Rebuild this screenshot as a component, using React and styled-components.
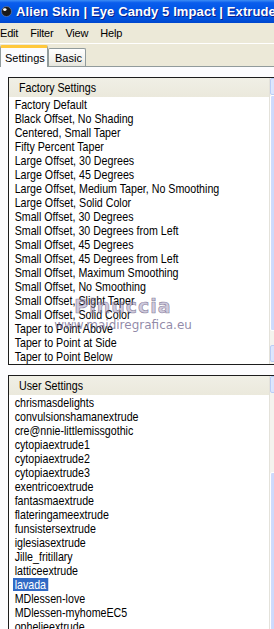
import React from 'react';
import styled, { createGlobalStyle } from 'styled-components';

const factorySettings = [
  'Factory Default',
  'Black Offset, No Shading',
  'Centered, Small Taper',
  'Fifty Percent Taper',
  'Large Offset, 30 Degrees',
  'Large Offset, 45 Degrees',
  'Large Offset, Medium Taper, No Smoothing',
  'Large Offset, Solid Color',
  'Small Offset, 30 Degrees',
  'Small Offset, 30 Degrees from Left',
  'Small Offset, 45 Degrees',
  'Small Offset, 45 Degrees from Left',
  'Small Offset, Maximum Smoothing',
  'Small Offset, No Smoothing',
  'Small Offset, Slight Taper',
  'Small Offset, Solid Color',
  'Taper to Point Above',
  'Taper to Point at Side',
  'Taper to Point Below',
];

const userSettings = [
  'chrismasdelights',
  'convulsionshamanextrude',
  'cre@nnie-littlemissgothic',
  'cytopiaextrude1',
  'cytopiaextrude2',
  'cytopiaextrude3',
  'exentricoextrude',
  'fantasmaextrude',
  'flateringameextrude',
  'funsistersextrude',
  'iglesiasextrude',
  'Jille_fritillary',
  'latticeextrude',
  'lavada',
  'MDlessen-love',
  'MDlessen-myhomeEC5',
  'ophelieextrude',
];

const GlobalStyle = createGlobalStyle`
  html, body {
    margin: 0;
    padding: 0;
    background: #ffffff;
    overflow: hidden;
  }
`;

const Window = styled.div`
  position: relative;
  width: 274px;
  height: 629px;
  overflow: hidden;
  display: flex;
  flex-direction: column;
  background: #ece9d8;
  font-family: 'Liberation Sans', Arial, sans-serif;
`;

const TitleBar = styled.div`
  height: 23px;
  flex-shrink: 0;
  display: flex;
  align-items: center;
  gap: 4px;
  padding-left: 1px;
  white-space: nowrap;
  background: linear-gradient(#3d8df5 0%, #0a5ded 12%, #0055e5 45%, #0053e0 80%, #0046cc 100%);
  color: #ffffff;
  font-weight: bold;
  font-size: 13px;
  letter-spacing: 0.1px;
  text-shadow: 1px 1px 0 #0a1e8c;
`;

const AppIcon = styled.svg`
  width: 11px;
  height: 11px;
  flex-shrink: 0;
`;

const MenuBar = styled.div`
  height: 20px;
  flex-shrink: 0;
  display: flex;
  align-items: center;
  gap: 12px;
  border-bottom: 1px solid #ffffff;
  font-size: 11px;
  color: #000;
`;

const MenuItem = styled.span`
  letter-spacing: -0.2px;
`;

const TabStrip = styled.div`
  height: 22px;
  flex-shrink: 0;
  display: flex;
  align-items: flex-end;
  border-bottom: 1px solid #919b9c;
`;

const Tab = styled.div`
  box-sizing: border-box;
  font-size: 11px;
  color: #000;
  display: flex;
  align-items: center;
  border: 1px solid #919b9c;
  border-bottom: none;
  border-radius: 2px 2px 0 0;
  height: ${({ $active }) => ($active ? '22px' : '18px')};
  margin-bottom: ${({ $active }) => ($active ? '-1px' : '0')};
  width: ${({ $width }) => $width}px;
  padding-left: ${({ $active }) => ($active ? '4px' : '6px')};
  background: ${({ $active }) =>
    $active ? '#fcfcfe' : 'linear-gradient(#ffffff, #f3f3ef 60%, #e6e5dc)'};
  border-top: ${({ $active }) => ($active ? '3px solid #ffc83c' : '1px solid #919b9c')};
  position: relative;
  z-index: ${({ $active }) => ($active ? 1 : 0)};
`;

const Panel = styled.div`
  flex: 1;
  background: #fcfcfe;
  padding: 10px 0 0 8px;
  display: flex;
  flex-direction: column;
  gap: 10px;
  overflow: hidden;
`;

const ListBox = styled.div`
  flex-shrink: 0;
  width: 279px;
  height: ${({ $height }) => $height}px;
  border: 1px solid #1c1c1c;
  display: grid;
  grid-template-columns: 260px 1px 17px;
  background: #ffffff;
  overflow: hidden;
`;

const ListBody = styled.div`
  display: flex;
  flex-direction: column;
  overflow: hidden;
`;

/* the dialog's list font is a narrow face; Arial metrics squeezed to match */
const narrowText = `
  font-family: 'Liberation Sans', Arial, sans-serif;
  font-size: 13px;
  transform: scaleX(0.82);
  transform-origin: left center;
`;

const ListHeader = styled.div`
  height: 19px;
  flex-shrink: 0;
  display: flex;
  align-items: center;
  padding-left: 10px;
  background: linear-gradient(#f0efe6, #ebe9dc);
  color: #000;
`;

const HeaderText = styled.span`
  display: inline-block;
  white-space: nowrap;
  ${narrowText}
`;

const Row = styled.div`
  height: 14px;
  flex-shrink: 0;
  padding-left: 4px;
  line-height: 14px;
  white-space: nowrap;
`;

const Label = styled.span`
  display: inline-block;
  padding: 0 3px 0 2px;
  height: 13px;
  line-height: 13px;
  margin-top: 1px;
  ${narrowText}
  background: ${({ $selected }) => ($selected ? '#316ac5' : 'transparent')};
  color: ${({ $selected }) => ($selected ? '#ffffff' : '#000000')};
`;

const Divider = styled.div`
  background: #e4e2da;
`;

const Scrollbar = styled.div`
  display: flex;
  flex-direction: column;
  background: #f4f3ee;
`;

const ScrollButton = styled.div`
  height: 17px;
  flex-shrink: 0;
  box-sizing: border-box;
  border: 1px solid #b9cdf6;
  border-radius: 2px;
  background: linear-gradient(90deg, #dfe8fd, #c3d4fc);
  display: flex;
  align-items: center;
  justify-content: flex-start;
  padding-left: 3px;
  font-size: 7px;
  color: #4d6185;
`;

const Track = styled.div`
  height: ${({ $size }) => $size}px;
  flex-shrink: 0;
`;

const Thumb = styled.div`
  height: ${({ $size }) => $size}px;
  flex-shrink: 0;
  box-sizing: border-box;
  border: 1px solid #ffffff;
  border-radius: 2px;
  background: linear-gradient(90deg, #cfdcfd, #bccffb);
  display: flex;
  align-items: center;
`;

const Grip = styled.div`
  margin-left: 4px;
  width: 6px;
  height: 7px;
  background: repeating-linear-gradient(#eef3fe 0 1px, #8ca7e5 1px 2px);
`;

const Watermark = styled.div`
  position: absolute;
  left: 60px;
  top: 296px;
  width: 126px;
  display: flex;
  flex-direction: column;
  align-items: center;
  pointer-events: none;
  color: rgba(110, 100, 140, 0.75);
  font-family: 'DejaVu Sans', sans-serif;
`;

const WatermarkName = styled.span`
  font-size: 19px;
  line-height: 20px;
  font-weight: bold;
  letter-spacing: 1px;
  color: rgba(160, 150, 185, 0.5);
  -webkit-text-stroke: 0.6px rgba(90, 80, 120, 0.7);
`;

const WatermarkUrl = styled.span`
  font-size: 12px;
  line-height: 12px;
  margin-top: 3px;
`;

const List = ({ title, items, selected, height, thumbTop, thumbSize, trackAfter }) => (
  <ListBox $height={height}>
    <ListBody>
      <ListHeader>
        <HeaderText>{title}</HeaderText>
      </ListHeader>
      {items.map((item) => (
        <Row key={item}>
          <Label $selected={item === selected}>{item}</Label>
        </Row>
      ))}
    </ListBody>
    <Divider />
    <Scrollbar>
      <ScrollButton>▲</ScrollButton>
      <Track $size={thumbTop} />
      <Thumb $size={thumbSize}>
        <Grip />
      </Thumb>
      {trackAfter > 0 && <Track $size={trackAfter} />}
      {trackAfter > 0 && <ScrollButton>▼</ScrollButton>}
    </Scrollbar>
  </ListBox>
);

const App = () => (
  <Window>
    <GlobalStyle />
    <TitleBar>
      <AppIcon viewBox="0 0 11 11">
        <circle cx="5.5" cy="5.5" r="5" fill="#1a1a1a" stroke="#7a8cab" strokeWidth="0.6" />
        <ellipse cx="3.8" cy="3.6" rx="1.8" ry="1.4" fill="#ffffff" />
      </AppIcon>
      <span>Alien Skin | Eye Candy 5 Impact | Extrude</span>
    </TitleBar>
    <MenuBar>
      <MenuItem>Edit</MenuItem>
      <MenuItem>Filter</MenuItem>
      <MenuItem>View</MenuItem>
      <MenuItem>Help</MenuItem>
    </MenuBar>
    <TabStrip>
      <Tab $active $width={48}>Settings</Tab>
      <Tab $width={38}>Basic</Tab>
    </TabStrip>
    <Panel>
      <List
        title="Factory Settings"
        items={factorySettings}
        height={286}
        thumbTop={0}
        thumbSize={236}
        trackAfter={14}
      />
      <List
        title="User Settings"
        items={userSettings}
        selected="lavada"
        height={300}
        thumbTop={79}
        thumbSize={170}
        trackAfter={0}
      />
    </Panel>
    <Watermark>
      <WatermarkName>Pinuccia</WatermarkName>
      <WatermarkUrl>www.maidiregrafica.eu</WatermarkUrl>
    </Watermark>
  </Window>
);

export default App;
